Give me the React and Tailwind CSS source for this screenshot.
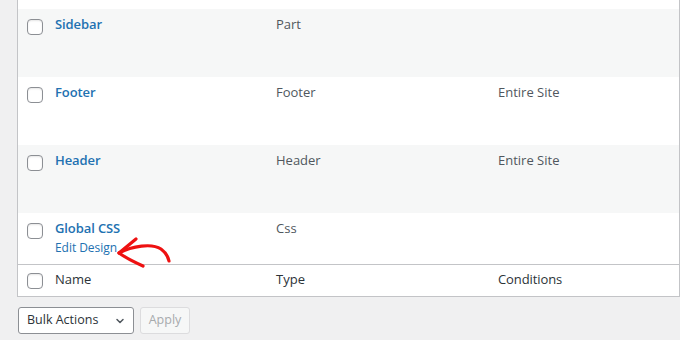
import React from "react";

const Checkbox = () => (
  <span className="block w-4 h-4 rounded-[4px] border border-[#8c8f94] bg-white shadow-[inset_0_1px_2px_rgba(0,0,0,0.1)]" />
);

const rows = [
  { name: "Sidebar", type: "Part", cond: "", bg: "bg-[#f6f7f7]" },
  { name: "Footer", type: "Footer", cond: "Entire Site", bg: "bg-white" },
  { name: "Header", type: "Header", cond: "Entire Site", bg: "bg-[#f6f7f7]" },
];

export default function App() {
  return (
    <div
      className="w-[680px] h-[340px] bg-[#f0f0f1] overflow-hidden pl-[17px] relative"
      style={{ fontFamily: '"Open Sans", "Noto Sans", sans-serif' }}
    >
      <div className="border-l border-r border-b border-[#c3c4c7] bg-white">
        <div className="h-[9px] bg-white" />
        {rows.map((r) => (
          <div
            key={r.name}
            className={`grid grid-cols-[37px_221px_222px_1fr] h-[68px] ${r.bg}`}
          >
            <div className="pl-[9px] pt-[10px]">
              <Checkbox />
            </div>
            <div className="pt-[6px] text-[13px] leading-[19.5px] font-semibold text-[#2271b1] tracking-[-0.1px]">
              {r.name}
            </div>
            <div className="pt-[6px] text-[13px] leading-[19.5px] text-[#50575e]">
              {r.type}
            </div>
            <div className="pt-[6px] text-[13px] leading-[19.5px] text-[#50575e]">
              {r.cond}
            </div>
          </div>
        ))}
        <div className="grid grid-cols-[37px_221px_222px_1fr] h-[51px] bg-white">
          <div className="pl-[9px] pt-[10px]">
            <Checkbox />
          </div>
          <div className="pt-[6px] flex flex-col">
            <span className="text-[13px] leading-[19.5px] font-semibold text-[#2271b1] tracking-[-0.1px]">
              Global CSS
            </span>
            <span className="text-[12px] leading-[18px] text-[#2271b1] tracking-[-0.05px]">
              Edit Design
            </span>
          </div>
          <div className="pt-[6px] text-[13px] leading-[19.5px] text-[#50575e]">
            Css
          </div>
          <div />
        </div>
        <div className="grid grid-cols-[37px_221px_222px_1fr] h-[32px] border-t border-[#c3c4c7] bg-white">
          <div className="pl-[9px] pt-[8px]">
            <Checkbox />
          </div>
          <div className="pt-[5px] text-[13px] leading-[19.5px] text-[#2c3338]">Name</div>
          <div className="pt-[5px] text-[13px] leading-[19.5px] text-[#2c3338]">Type</div>
          <div className="pt-[5px] text-[13px] leading-[19.5px] text-[#2c3338] tracking-[-0.1px]">Conditions</div>
        </div>
      </div>

      <div className="flex gap-[6px] mt-[10px] pl-[1px]">
        <div className="w-[116px] h-[27px] border border-[#8c8f94] rounded-[3px] bg-white flex items-center justify-between pl-[8px] pr-[8px]">
          <span className="text-[12.5px] text-[#2c3338]">Bulk Actions</span>
          <svg width="10" height="10" viewBox="0 0 10 10" fill="none">
            <path d="M2 3.5 L5 6.5 L8 3.5" stroke="#50575e" strokeWidth="1.5" strokeLinecap="round" strokeLinejoin="round" />
          </svg>
        </div>
        <div className="w-[50px] h-[27px] border border-[#dcdcde] rounded-[3px] bg-[#f6f7f7] flex items-center justify-center">
          <span className="text-[12.5px] text-[#a7aaad]">Apply</span>
        </div>
      </div>

      <svg
        className="absolute left-0 top-0 pointer-events-none"
        width="680"
        height="340"
        viewBox="0 0 680 340"
        fill="none"
      >
        <path
          d="M119 253 C132 246 152 243 161 249 C165 252 168 256 169 261"
          stroke="#ee1111"
          strokeWidth="3.2"
          strokeLinecap="round"
          fill="none"
        />
        <path
          d="M136 239 L119 253 C126 258 134 262 143 266"
          stroke="#ee1111"
          strokeWidth="3.2"
          strokeLinecap="round"
          strokeLinejoin="round"
          fill="none"
        />
      </svg>
    </div>
  );
}
